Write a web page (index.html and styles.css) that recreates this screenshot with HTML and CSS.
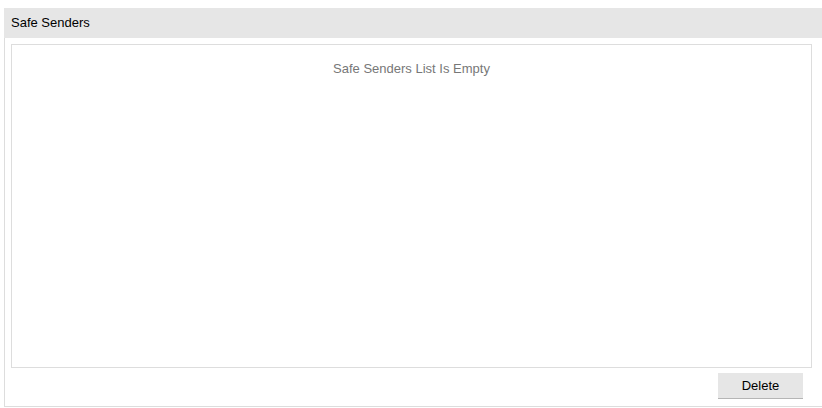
FILE: index.html
```html
<!DOCTYPE html>
<html>
<head>
<meta charset="utf-8">
<link rel="stylesheet" href="styles.css">
</head>
<body>
<div class="panel">
  <div class="panel-header">Safe Senders</div>
  <div class="panel-body">
    <div class="list-box">
      <div class="empty">Safe Senders List Is Empty</div>
    </div>
    <div class="actions">
      <button class="btn">Delete</button>
    </div>
  </div>
</div>
</body>
</html>
```

FILE: styles.css
```css
html, body {
  margin: 0;
  padding: 0;
  background: #fff;
  font-family: "Liberation Sans", Arial, sans-serif;
  font-size: 13px;
  overflow: hidden;
}
body {
  padding: 8px 0 0 4px;
}
.panel {
  width: 820px;
}
.panel-header {
  height: 30px;
  line-height: 30px;
  background: #e6e6e6;
  color: #000;
  padding-left: 7px;
}
.panel-body {
  border-left: 1px solid #ddd;
  border-bottom: 1px solid #ddd;
  border-right: 1px solid #ddd;
  padding: 6px 10px 8px 6px;
}
.list-box {
  width: 799px;
  height: 322px;
  border: 1px solid #ddd;
  box-sizing: content-box;
}
.empty {
  text-align: center;
  color: #777;
  margin-top: 16px;
  line-height: 15px;
}
.actions {
  display: flex;
  justify-content: flex-end;
  width: 801px;
  margin-top: 5px;
}
.btn {
  width: 85px;
  height: 25px;
  margin-right: 9px;
  border: none;
  background: #e6e6e6;
  box-shadow: 0 1px 0 #b5b5b5;
  font-family: "Liberation Sans", Arial, sans-serif;
  font-size: 13px;
  color: #000;
  padding: 0;
}
```
